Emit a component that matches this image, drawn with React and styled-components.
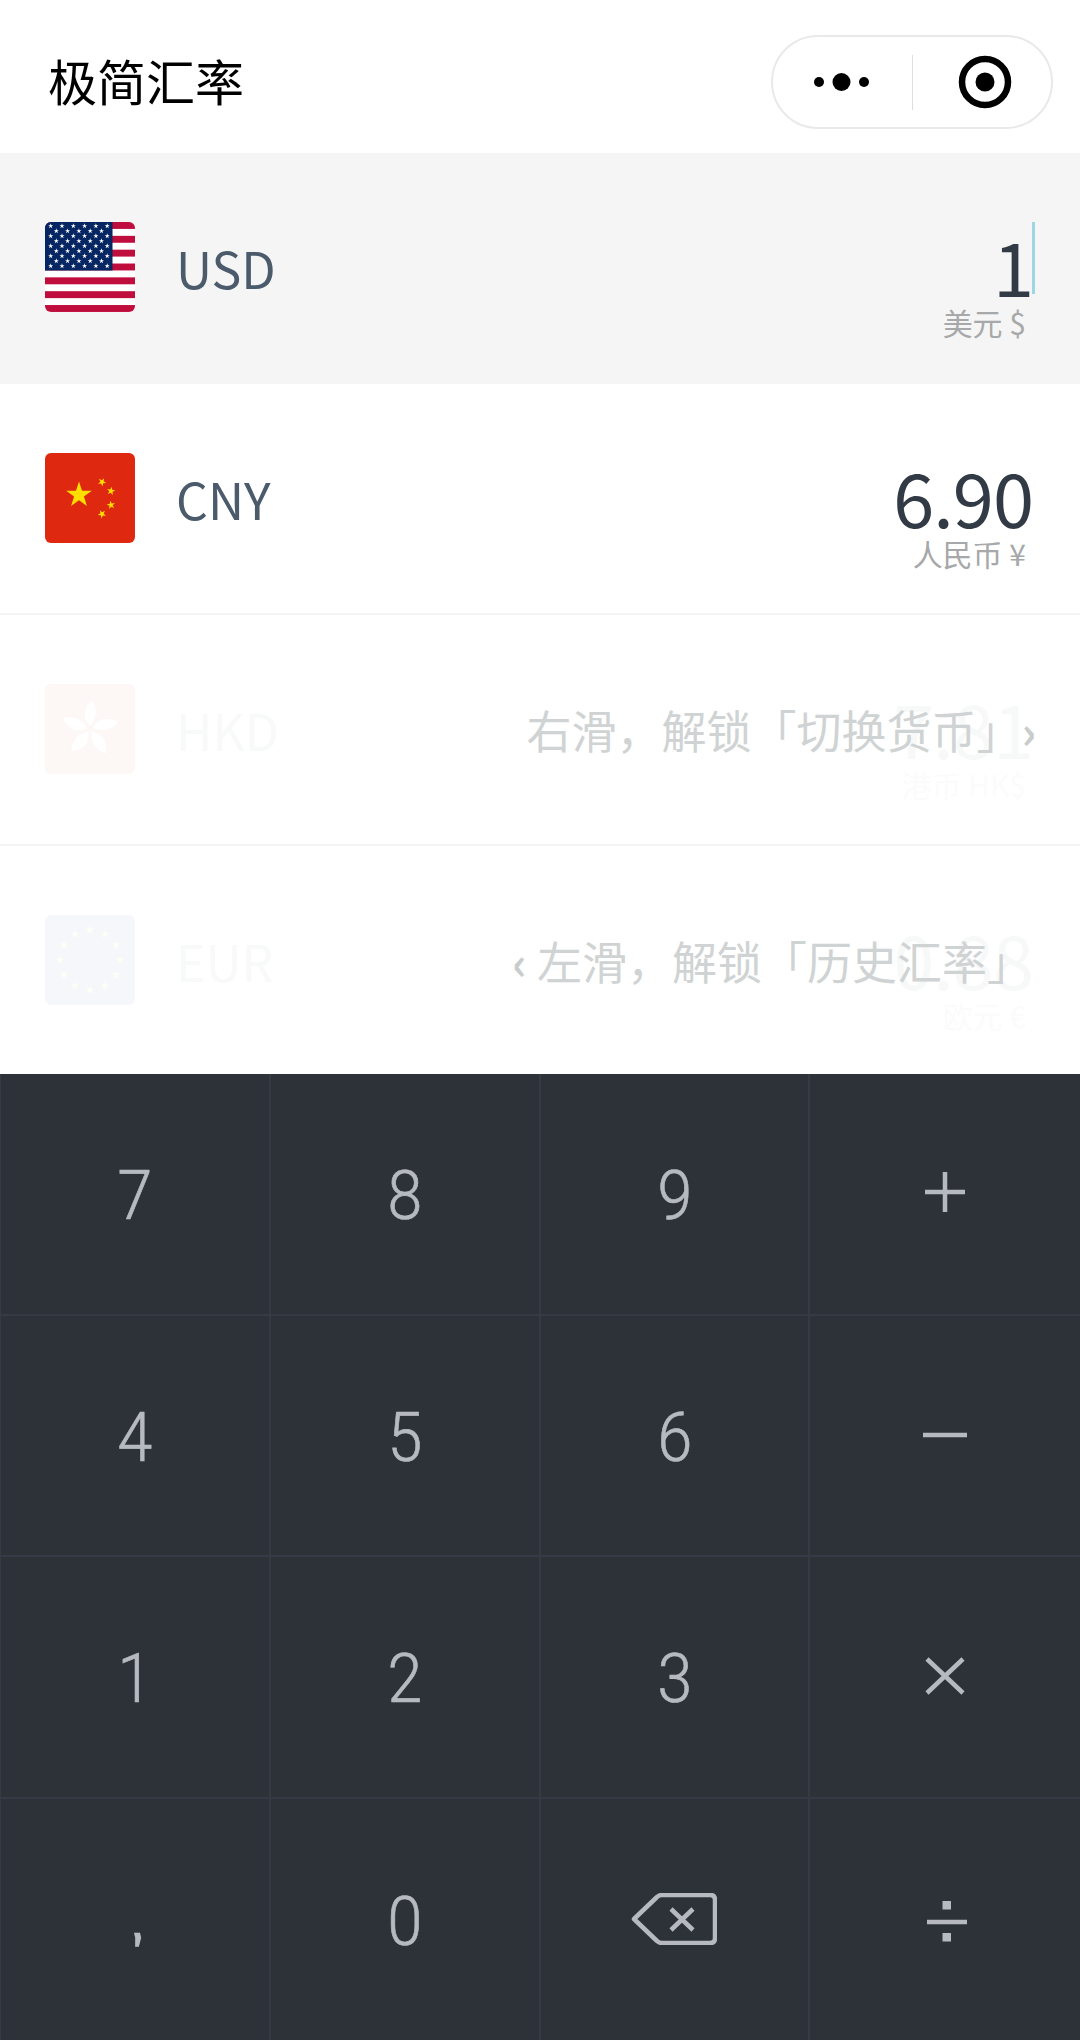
import React from "react";
import styled, { createGlobalStyle } from "styled-components";

const GlobalStyle = createGlobalStyle`
  html, body {
    margin: 0;
    padding: 0;
    background: #fff;
  }
  body {
    font-family: "Noto Sans CJK SC", "Noto Sans", sans-serif;
  }
`;

const Page = styled.div`
  width: 1080px;
  height: 2040px;
  overflow: hidden;
  display: flex;
  flex-direction: column;
`;

const Header = styled.header`
  height: 153px;
  flex: none;
  display: flex;
  align-items: center;
  justify-content: space-between;
  padding: 0 27px 0 48px;
  box-sizing: border-box;
`;

const Title = styled.h1`
  margin: 0 0 -6px;
  font-size: 49px;
  font-weight: 400;
  color: #000;
  line-height: 1;
`;

const Capsule = styled.div`
  width: 282px;
  height: 94px;
  box-sizing: border-box;
  border: 2px solid #e9e9e9;
  border-radius: 47px;
  display: flex;
  align-items: center;
  margin-top: 11px;
`;

const CapsulePart = styled.div`
  flex: 1;
  height: 55px;
  box-sizing: border-box;
  display: flex;
  align-items: center;
  justify-content: center;
  padding-left: ${(p) => p.$shift}px;
  & + & {
    border-left: 1px solid #dedede;
  }
`;

const Rows = styled.div`
  height: 921px;
  flex: none;
  overflow: hidden;
`;

const Row = styled.div`
  height: 231px;
  box-sizing: border-box;
  padding: 69px 0 0 45px;
  display: flex;
  align-items: flex-start;
  position: relative;
  background: ${(p) => (p.$active ? "#f5f5f5" : "#fff")};
  border-bottom: ${(p) => (p.$line ? "2px solid #f3f4f4" : "none")};
`;

const RowBody = styled.div`
  flex: 1;
  display: flex;
  opacity: ${(p) => (p.$faded ? 0.03 : 1)};
`;

const Flag = styled.svg`
  width: 90px;
  height: 90px;
  flex: none;
  border-radius: 6px;
  display: block;
`;

const Code = styled.div`
  margin-left: 41px;
  font-size: 50px;
  line-height: 90px;
  color: #4b5b6b;
  font-weight: 400;
`;

const Amounts = styled.div`
  margin-left: auto;
  padding-right: 47px;
  text-align: right;
`;

const Amount = styled.div`
  font-size: 74px;
  line-height: 76px;
  letter-spacing: -1px;
  color: #323b45;
  margin-top: 5px;
  font-weight: 400;
`;

const CurrencyName = styled.div`
  font-size: 30px;
  line-height: 34px;
  color: #a6a8aa;
  margin-top: 2px;
  padding-right: 7px;
  font-weight: 400;
`;

const Cursor = styled.span`
  position: absolute;
  right: 45px;
  top: 69px;
  width: 3px;
  height: 72px;
  background: #9fd6e4;
`;

const Hint = styled.div`
  position: absolute;
  right: ${(p) => p.$right}px;
  top: 85px;
  font-size: 45px;
  line-height: 60px;
  color: #d0d3d3;
  white-space: nowrap;
  font-weight: 400;
`;

const Chevron = styled.span`
  font-weight: 700;
  color: #c9cccc;
`;

const Keypad = styled.div`
  flex: 1;
  display: grid;
  grid-template-columns: repeat(4, 1fr);
  grid-template-rows: repeat(4, 1fr);
  background: #2d3239;
  border-left: 1px solid #353a44;
`;

const Key = styled.div`
  display: flex;
  align-items: center;
  justify-content: center;
  box-sizing: border-box;
  color: #b6bac0;
  font-family: "Roboto", "Noto Sans", sans-serif;
  font-weight: 300;
  font-size: 68px;
  line-height: 1;
  border-right: ${(p) => (p.$last ? "none" : "2px solid #353a44")};
  border-bottom: ${(p) => (p.$bottom ? "none" : "2px solid #353a44")};
`;

const Digit = styled.span`
  display: block;
  margin-top: 5px;
  transform: scaleX(0.92);
  -webkit-text-stroke: 0.7px #b6bac0;
`;

const Comma = styled.span`
  display: block;
  font-family: "DejaVu Sans", sans-serif;
  font-weight: 400;
  font-size: 58px;
  margin: 2px 4px 0 0;
  transform: skewX(14deg);
`;

const KeyIcon = styled.svg`
  display: block;
  fill: none;
  stroke: #b6bac0;
  margin: ${(p) => p.$margin || "0"};
`;

const starPoints = (cx, cy, r, rot = -90) => {
  const pts = [];
  for (let i = 0; i < 10; i++) {
    const a = ((rot + i * 36) * Math.PI) / 180;
    const d = i % 2 === 0 ? r : r * 0.382;
    pts.push(`${(cx + d * Math.cos(a)).toFixed(2)},${(cy + d * Math.sin(a)).toFixed(2)}`);
  }
  return pts.join(" ");
};

const UsFlag = () => {
  const stars = [];
  for (let r = 0; r < 9; r++) {
    const n = r % 2 === 0 ? 6 : 5;
    for (let c = 0; c < n; c++) {
      stars.push(
        <polygon
          key={`${r}-${c}`}
          points={starPoints((r % 2 === 0 ? 5.7 : 11.3) + c * 11.3, 4 + r * 5, 2.7)}
          fill="#fff"
        />
      );
    }
  }
  const stripes = [0, 2, 4, 6, 8, 10, 12];
  return (
    <Flag viewBox="0 0 90 90">
      <rect width="90" height="90" fill="#fff" />
      {stripes.map((n) => (
        <rect key={n} x="0" y={n * 6.92} width="90" height="6.92" fill="#bf0d3e" />
      ))}
      <rect width="67.5" height="48.5" fill="#062663" />
      {stars}
    </Flag>
  );
};

const CnFlag = () => (
  <Flag viewBox="0 0 90 90">
    <rect width="90" height="90" fill="#de2910" />
    <polygon points={starPoints(34, 42, 13.5)} fill="#ffde00" />
    <polygon points={starPoints(57, 29, 4.4, -60)} fill="#ffde00" />
    <polygon points={starPoints(66, 38, 4.4, -80)} fill="#ffde00" />
    <polygon points={starPoints(66, 52, 4.4, -100)} fill="#ffde00" />
    <polygon points={starPoints(57, 61, 4.4, -120)} fill="#ffde00" />
  </Flag>
);

const HkFlag = () => (
  <Flag viewBox="0 0 90 90">
    <rect width="90" height="90" fill="#de2910" />
    {[0, 72, 144, 216, 288].map((a) => (
      <path
        key={a}
        d="M45 42C37 35 38 24 47 16C53 24 52 35 45 42Z"
        fill="#fff"
        transform={`rotate(${a} 45 45)`}
      />
    ))}
  </Flag>
);

const EuFlag = () => (
  <Flag viewBox="0 0 90 90">
    <rect width="90" height="90" fill="#0a3399" />
    {Array.from({ length: 12 }).map((_, i) => {
      const a = (i * 30 * Math.PI) / 180;
      return (
        <polygon
          key={i}
          points={starPoints(45 + 30 * Math.cos(a), 45 + 30 * Math.sin(a), 4.5)}
          fill="#ffde00"
        />
      );
    })}
  </Flag>
);

const currencies = [
  { code: "USD", value: "1", name: "美元 $", flag: <UsFlag /> },
  { code: "CNY", value: "6.90", name: "人民币 ¥", flag: <CnFlag /> },
  { code: "HKD", value: "7.81", name: "港币 HK$", flag: <HkFlag /> },
  { code: "EUR", value: "0.88", name: "欧元 €", flag: <EuFlag /> },
];

const keys = [
  "7", "8", "9", "+",
  "4", "5", "6", "minus",
  "1", "2", "3", "times",
  "comma", "0", "back", "divide",
];

const renderKey = (k) => {
  if (k === "minus") {
    return (
      <KeyIcon width="44" height="44" viewBox="0 0 44 44" strokeWidth="4.5">
        <path d="M0 22H44" />
      </KeyIcon>
    );
  }
  if (k === "+") {
    return (
      <KeyIcon width="40" height="40" viewBox="0 0 40 40" strokeWidth="4.5" $margin="-3px 0 0">
        <path d="M0 20H40M20 0V40" />
      </KeyIcon>
    );
  }
  if (k === "times") {
    return (
      <KeyIcon width="40" height="40" viewBox="0 0 40 40" strokeWidth="4.5" $margin="-2px 0 0">
        <path d="M2 3L38 37M38 3L2 37" />
      </KeyIcon>
    );
  }
  if (k === "divide") {
    return (
      <KeyIcon width="42" height="44" viewBox="0 0 42 44" strokeWidth="4.5" $margin="6px 0 0 4px">
        <path d="M1 22H41" />
        <rect x="16.5" y="1" width="8.5" height="8.5" fill="#b6bac0" strokeWidth="0" />
        <rect x="16.5" y="33" width="8.5" height="8.5" fill="#b6bac0" strokeWidth="0" />
      </KeyIcon>
    );
  }
  if (k === "back") {
    return (
      <KeyIcon width="86" height="52" viewBox="0 0 86 52" strokeWidth="4.5" strokeLinejoin="round">
        <path d="M3 26L26 4Q28 2 31 2H79Q84 2 84 7V45Q84 50 79 50H31Q28 50 26 48Z" />
        <path d="M40 16L62 37M62 16L40 37" />
      </KeyIcon>
    );
  }
  if (k === "comma") {
    return <Comma>,</Comma>;
  }
  return <Digit>{k}</Digit>;
};

export default function App() {
  return (
    <Page>
      <GlobalStyle />
      <Header>
        <Title>极简汇率</Title>
        <Capsule>
          <CapsulePart $shift={6}>
            <svg width="64" height="20" viewBox="0 0 64 20">
              <circle cx="5" cy="10" r="5" fill="#000" />
              <circle cx="27.5" cy="10" r="9" fill="#000" />
              <circle cx="50" cy="10" r="5" fill="#000" />
            </svg>
          </CapsulePart>
          <CapsulePart $shift={5}>
            <svg width="54" height="54" viewBox="0 0 54 54">
              <circle cx="27" cy="27" r="23" fill="none" stroke="#000" strokeWidth="6.5" />
              <circle cx="27" cy="27" r="9.5" fill="#000" />
            </svg>
          </CapsulePart>
        </Capsule>
      </Header>
      <Rows>
        {currencies.map((c, i) => (
          <Row key={c.code} $active={i === 0} $line={i === 1 || i === 2}>
            <RowBody $faded={i > 1}>
              {c.flag}
              <Code>{c.code}</Code>
              <Amounts>
                <Amount>{c.value}</Amount>
                <CurrencyName>{c.name}</CurrencyName>
              </Amounts>
            </RowBody>
            {i === 0 && <Cursor />}
            {i === 2 && (
              <Hint $right={44}>
                右滑，解锁「切换货币」<Chevron>›</Chevron>
              </Hint>
            )}
            {i === 3 && (
              <Hint $right={48}>
                <Chevron>‹</Chevron> 左滑，解锁「历史汇率」
              </Hint>
            )}
          </Row>
        ))}
      </Rows>
      <Keypad>
        {keys.map((k, i) => (
          <Key key={k} $last={i % 4 === 3} $bottom={i >= 12}>
            {renderKey(k)}
          </Key>
        ))}
      </Keypad>
    </Page>
  );
}
